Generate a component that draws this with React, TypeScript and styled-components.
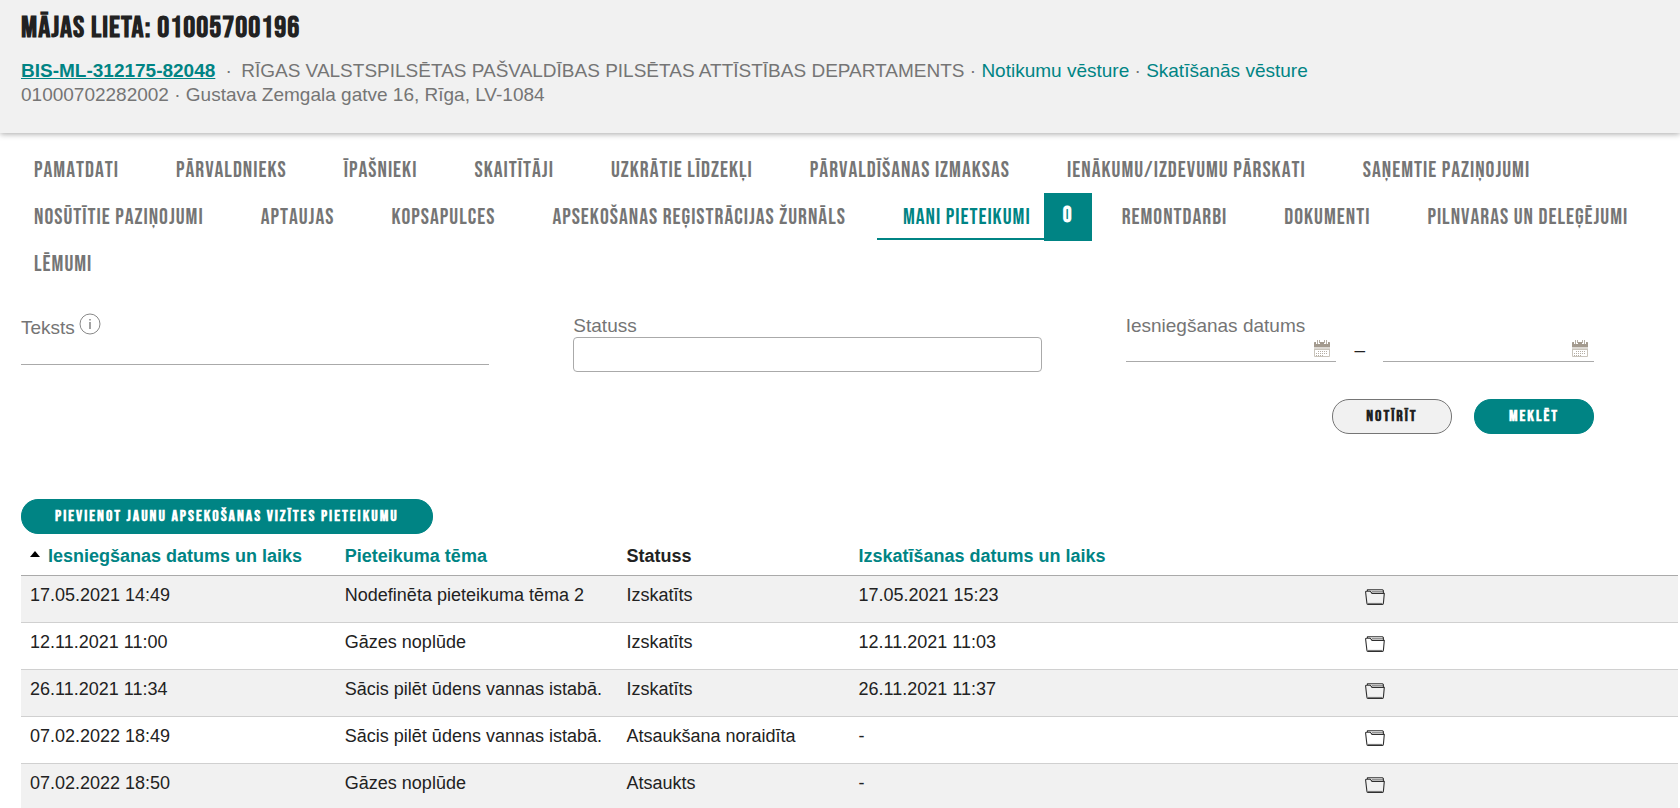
import React from 'react';
import styled, { createGlobalStyle } from 'styled-components';

const teal = '#008484';
const narrow = `'Bebas Neue', 'Liberation Sans Narrow', 'Arial Narrow', sans-serif`;

const GlobalStyle = createGlobalStyle`
  * { box-sizing: border-box; }
  html, body { margin: 0; background: #fff; }
  body {
    font-family: 'Liberation Sans', Arial, sans-serif;
    font-size: 18px;
    line-height: 22px;
    color: #222;
    overflow-x: hidden;
  }
  a { color: ${teal}; text-decoration: none; }
`;

const Header = styled.header`
  padding: 13px 21px 26px;
  background: #f1f1f1;
  box-shadow: 0 1px 6px rgba(0, 0, 0, 0.35);
  color: #757575;
  font-size: 19px;
  line-height: 24px;
`;

const Title = styled.h1`
  margin: 0 0 16px;
  font-family: ${narrow};
  font-size: 30px;
  line-height: 30px;
  letter-spacing: 1px;
  color: #222;
`;

const CaseLine = styled.div``;

const CaseLink = styled.a`
  margin-right: 5px;
  font-weight: bold;
  text-decoration: underline;
`;

const Owner = styled.span`
  margin-left: 4px;
`;

const Tabs = styled.nav`
  display: flex;
  flex-wrap: wrap;
  column-gap: 4px;
  padding: 13px 8px 0;
`;

const Tab = styled.a<{ $active?: boolean }>`
  display: flex;
  height: 47px;
  padding: 0 ${p => (p.$active ? 0 : 27)}px 0 26px;
  font-family: ${narrow};
  font-size: 22px;
  font-kerning: none;
  line-height: 49px;
  letter-spacing: 1px;
  color: ${p => (p.$active ? teal : '#757575')};
  box-shadow: ${p => (p.$active ? `inset 0 -2px ${teal}` : 'none')};
`;

const Badge = styled.span`
  width: 48px;
  height: 48px;
  margin-left: 13px;
  background: ${teal};
  color: #fff;
  font-weight: bold;
  line-height: 46px;
  text-align: center;
`;

const Filters = styled.form`
  display: grid;
  grid-template-columns: repeat(3, minmax(0, 1fr));
  column-gap: 84px;
  padding: 28px 86px 0 21px;
  color: #757575;
`;

const Field = styled.div`
  display: flex;
  flex-direction: column;
  font-size: 19px;
`;

const LabelRow = styled.div`
  display: flex;
  align-items: flex-end;
  gap: 4px;
  height: 24px;
`;

const InfoIcon = styled.svg`
  width: 22px;
  height: 22px;
  margin-bottom: 4px;
`;

const LineInput = styled.input`
  width: 100%;
  height: 26px;
  padding: 0 4px;
  border: 0;
  border-bottom: 1px solid #aaa;
  background: transparent;
  font: inherit;
  color: #222;
`;

const StatusSelect = styled.select`
  appearance: none;
  height: 35px;
  border: 1px solid #aaa;
  border-radius: 4px;
  background: #fff;
  font: inherit;
`;

const DateRange = styled.div`
  display: grid;
  grid-template-columns: minmax(0, 1fr) 47px minmax(0, 1fr);
  align-items: center;
  color: #222;
  text-align: center;
`;

const DateBox = styled.div`
  display: flex;
  align-items: center;
  height: 25px;
  padding: 0 6px 2px 0;
  border-bottom: 1px solid #aaa;
`;

const DateInput = styled.input`
  flex: 1;
  min-width: 0;
  height: 22px;
  border: 0;
  background: transparent;
  font: inherit;
`;

const IconButton = styled.button`
  display: flex;
  padding: 0;
  border: 0;
  background: none;
`;

const Actions = styled.div`
  display: flex;
  justify-content: flex-end;
  gap: 22px;
  grid-column: 1 / -1;
  margin-top: 27px;
`;

const Button = styled.button<{ $light?: boolean }>`
  min-width: 120px;
  height: 35px;
  padding: 0 33px;
  border: 1px solid ${p => (p.$light ? '#757575' : teal)};
  border-radius: 17px;
  background: ${p => (p.$light ? '#f1f1f1' : teal)};
  color: ${p => (p.$light ? '#222' : '#fff')};
  font-family: ${narrow};
  font-size: 16px;
  font-weight: bold;
  letter-spacing: 2px;
`;

const Results = styled.section`
  padding: 65px 2px 0 21px;
`;

const Table = styled.table`
  width: 100%;
  table-layout: fixed;
  border-collapse: separate;
  border-spacing: 0;
`;

const Th = styled.th<{ $width: number }>`
  width: ${p => p.$width}%;
  height: 42px;
  padding: 3px 9px 0;
  border-bottom: 1px solid #aaa;
  text-align: left;
  white-space: nowrap;
`;

const SortMark = styled.svg`
  width: 10px;
  height: 8px;
  margin-right: 8px;
  vertical-align: 4px;
`;

const Row = styled.tr`
  &:nth-child(odd) { background: #f1f1f1; }
`;

const Td = styled.td`
  height: 47px;
  padding: 8px 9px 0;
  border-bottom: 1px solid #d0d0d0;
  vertical-align: top;
  white-space: nowrap;
`;

const FolderLink = styled.a`
  display: flex;
  padding: 5px 0 0 1px;
`;

const Calendar = () => (
  <svg width="16" height="18" viewBox="0 0 16 18" aria-hidden="true">
    <rect x="0" y="3" width="16" height="15" rx="1" fill="#c9c4bb" />
    <path d="M0 4q0-1 1-1h14q1 0 1 1v4H0z" fill="#a39a8e" />
    <path d="M2 0h4v5H2zM10 0h4v5h-4z" fill="#fff" />
    <path d="M3 1h1v4H3zM5 1h1v3H5zM10 1h1v3h-1zM12 1h1v4h-1z" fill="#b5aea4" />
    <path d="M0 8h16v2H0z" fill="#dcd8d2" />
    <path d="M1 11h14v6H1z" fill="#fff" />
    <path d="M4 12.500h10M2 14.500h12M2 16.500h8" stroke="#b5aea4" strokeDasharray="1 1" />
  </svg>
);

const Folder = () => (
  <svg width="20" height="16" viewBox="0 0 20 16" fill="none" aria-hidden="true">
    <path d="M7 2.600h11M3 14.400h14" stroke="#888" />
    <path d="M2.400 2V.8h15.200l.8.8v2.600M.6 3q0-.7.9-.7h3.300q.8 0 1.200.7l1 1.400h12.300l-.9 9.800q-.1 1.200-1 1.200H3q-1 0-1.100-1.200Z" stroke="#303030" strokeWidth="1.100" strokeLinejoin="round" />
  </svg>
);

const tabs = [
  'PAMATDATI', 'PĀRVALDNIEKS', 'ĪPAŠNIEKI', 'SKAITĪTĀJI', 'UZKRĀTIE LĪDZEKĻI',
  'PĀRVALDĪŠANAS IZMAKSAS', 'IENĀKUMU/IZDEVUMU PĀRSKATI', 'SAŅEMTIE PAZIŅOJUMI',
  'NOSŪTĪTIE PAZIŅOJUMI', 'APTAUJAS', 'KOPSAPULCES', 'APSEKOŠANAS REĢISTRĀCIJAS ŽURNĀLS',
  'MANI PIETEIKUMI', 'REMONTDARBI', 'DOKUMENTI', 'PILNVARAS UN DELEĢĒJUMI', 'LĒMUMI',
];

const rows = [
  ['17.05.2021 14:49', 'Nodefinēta pieteikuma tēma 2', 'Izskatīts', '17.05.2021 15:23'],
  ['12.11.2021 11:00', 'Gāzes noplūde', 'Izskatīts', '12.11.2021 11:03'],
  ['26.11.2021 11:34', 'Sācis pilēt ūdens vannas istabā.', 'Izskatīts', '26.11.2021 11:37'],
  ['07.02.2022 18:49', 'Sācis pilēt ūdens vannas istabā.', 'Atsaukšana noraidīta', '-'],
  ['07.02.2022 18:50', 'Gāzes noplūde', 'Atsaukts', '-'],
];

export default function App() {
  return (
    <>
      <GlobalStyle />
      <Header>
        <Title>MĀJAS LIETA: 01005700196</Title>
        <CaseLine>
          <CaseLink href="#lieta">BIS-ML-312175-82048</CaseLink>{' · '}
          <Owner>RĪGAS VALSTSPILSĒTAS PAŠVALDĪBAS PILSĒTAS ATTĪSTĪBAS DEPARTAMENTS</Owner>{' · '}
          <a href="#notikumi">Notikumu vēsture</a>{' · '}
          <a href="#skatisanas">Skatīšanās vēsture</a>
        </CaseLine>
        <CaseLine>01000702282002 · Gustava Zemgala gatve 16, Rīga, LV-1084</CaseLine>
      </Header>
      <Tabs>
        {tabs.map(name => {
          const active = name === 'MANI PIETEIKUMI';
          return (
            <Tab key={name} href="#tab" $active={active}>
              {name}
              {active && <Badge>0</Badge>}
            </Tab>
          );
        })}
      </Tabs>
      <main>
        <Filters onSubmit={e => e.preventDefault()}>
          <Field>
            <LabelRow>
              <label htmlFor="text">Teksts</label>
              <InfoIcon viewBox="0 0 22 22" fill="none" aria-hidden="true">
                <circle cx="11" cy="11" r="10" stroke="#888" />
                <path d="M11 9v7M11 6v1.500" stroke="#666" strokeWidth="1.200" />
              </InfoIcon>
            </LabelRow>
            <LineInput id="text" type="text" />
          </Field>
          <Field>
            <label htmlFor="status">Statuss</label>
            <StatusSelect id="status"><option value="" /></StatusSelect>
          </Field>
          <Field>
            <label htmlFor="from">Iesniegšanas datums</label>
            <DateRange>
              <DateBox>
                <DateInput id="from" type="text" />
                <IconButton type="button" aria-label="Datums no"><Calendar /></IconButton>
              </DateBox>
              <span>–</span>
              <DateBox>
                <DateInput aria-label="Datums līdz" type="text" />
                <IconButton type="button" aria-label="Datums līdz"><Calendar /></IconButton>
              </DateBox>
            </DateRange>
          </Field>
          <Actions>
            <Button type="reset" $light>NOTĪRĪT</Button>
            <Button type="submit">MEKLĒT</Button>
          </Actions>
        </Filters>
        <Results>
          <Button type="button">PIEVIENOT JAUNU APSEKOŠANAS VIZĪTES PIETEIKUMU</Button>
          <Table>
            <thead>
              <tr>
                <Th $width={19}>
                  <SortMark viewBox="0 0 10 8" aria-hidden="true"><path d="M5 1 10 7H0z" fill="#000" /></SortMark>
                  <a href="#sort">Iesniegšanas datums un laiks</a>
                </Th>
                <Th $width={17}><a href="#sort">Pieteikuma tēma</a></Th>
                <Th $width={14}>Statuss</Th>
                <Th $width={30.5}><a href="#sort">Izskatīšanas datums un laiks</a></Th>
                <Th $width={19.5} />
              </tr>
            </thead>
            <tbody>
              {rows.map(row => (
                <Row key={row[0]}>
                  {row.map((value, i) => <Td key={i}>{value}</Td>)}
                  <Td><FolderLink href="#atvert" aria-label="Atvērt"><Folder /></FolderLink></Td>
                </Row>
              ))}
            </tbody>
          </Table>
        </Results>
      </main>
    </>
  );
}
